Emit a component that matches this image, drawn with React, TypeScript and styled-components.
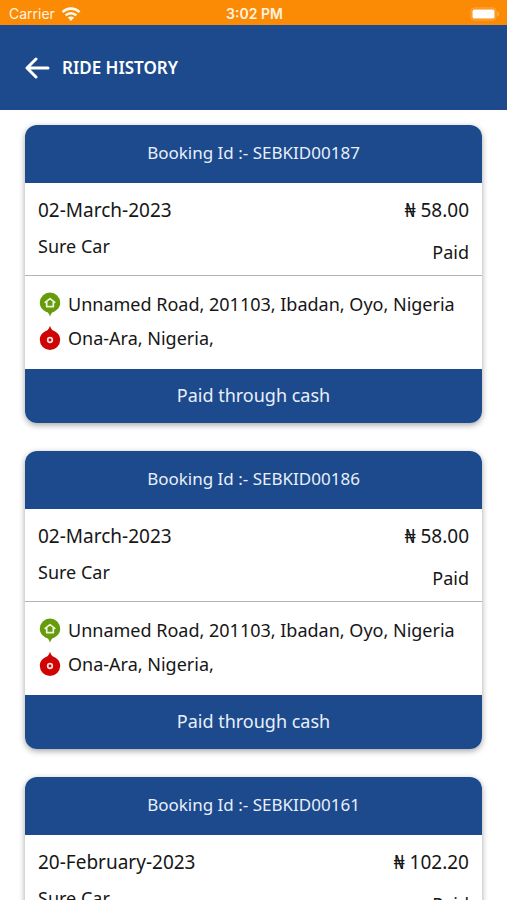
import React from "react";
import styled, { createGlobalStyle } from "styled-components";

const blue = "#1c4a8d";
const orange = "#fb8b04";

const GlobalStyle = createGlobalStyle`
  *, *::before, *::after { box-sizing: border-box; }
  html { scrollbar-width: none; }
  body {
    margin: 0;
    background: #fff;
    color: #161616;
    font-family: "Noto Sans", "Open Sans", sans-serif;
  }
  h1, h2, p, ul { margin: 0; padding: 0; }
`;

const Page = styled.div`
  min-height: 100vh;
`;

const StatusBar = styled.div`
  display: grid;
  grid-template-columns: 1fr auto 1fr;
  align-items: center;
  height: 25px;
  padding: 2px 7px 0 9px;
  background: ${orange};
  color: #fff3e2;
  font: 14px/20px Inter, sans-serif;
`;

const Carrier = styled.div`
  display: flex;
  align-items: center;
  gap: 6px;
`;

const Clock = styled.time`
  font-size: 14px;
  font-weight: 600;
`;

const Battery = styled.svg`
  justify-self: end;
`;

const AppBar = styled.header`
  display: flex;
  align-items: center;
  gap: 12px;
  height: 85px;
  padding: 0 25px;
  background: ${blue};
  color: #fff;
`;

const BackButton = styled.button`
  display: flex;
  padding: 0;
  border: 0;
  background: none;
  color: inherit;
  cursor: pointer;
`;

const Title = styled.h1`
  font-size: 17px;
  font-weight: 600;
  line-height: 24px;
`;

const RideList = styled.ul`
  display: flex;
  flex-direction: column;
  gap: 28px;
  padding: 15px 25px 28px;
  list-style: none;
`;

const Card = styled.li`
  overflow: hidden;
  border-radius: 12px;
  background: #fff;
  box-shadow: 0 2px 6px rgba(0, 0, 0, 0.36);
`;

const CardHeader = styled.h2`
  padding: 15px 12px 17px;
  background: ${blue};
  color: #e9effa;
  font-size: 17px;
  font-weight: 400;
  line-height: 26px;
  text-align: center;
`;

const Summary = styled.div`
  display: flex;
  justify-content: space-between;
  height: 93px;
  padding: 14px 13px 0;
  border-bottom: 1px solid #b3b3b3;
`;

const SummaryColumn = styled.div<{ $end?: boolean }>`
  display: flex;
  flex-direction: column;
  gap: ${({ $end }) => ($end ? 16 : 10)}px;
  text-align: ${({ $end }) => ($end ? "right" : "left")};
  font-size: 18px;
  line-height: 26px;
`;

const Lead = styled.p`
  font-size: 19px;
`;

const Route = styled.div`
  display: flex;
  flex-direction: column;
  gap: 8px;
  padding: 15px 13px 18px;
`;

const Stop = styled.div`
  display: flex;
  align-items: center;
  gap: 6px;
  font-size: 18px;
  line-height: 26px;
`;

const CardFooter = styled.p`
  padding: 13px 12px 15px;
  background: ${blue};
  color: #e9effa;
  font-size: 18px;
  line-height: 26px;
  text-align: center;
`;

const WifiIcon = () => (
  <svg width="20" height="14" viewBox="0 0 20 14" aria-hidden="true">
    <g fill="none" stroke="#fff8ed" strokeWidth="2.6">
      <path d="M1.5 5.2C6.3 0.4 13.7 0.4 18.5 5.2" />
      <path d="M4.6 8.4C7.7 5.5 12.3 5.5 15.4 8.4" />
    </g>
    <path d="M6.8 10.6C8.6 9 11.4 9 13.2 10.6L10 13.9Z" fill="#fff8ed" />
  </svg>
);

const BatteryIcon = () => (
  <Battery width="30" height="14" viewBox="0 0 30 14" role="img" aria-label="Battery full">
    <rect x="1" y="1" width="25" height="12" rx="3" fill="none" stroke="#fda94a" />
    <rect x="2.5" y="2.5" width="22" height="9" rx="1.5" fill="#fff" />
    <path d="M27.500 4.500C29.500 5.200 29.500 8.800 27.500 9.500Z" fill="#fdb65f" />
  </Battery>
);

const ArrowIcon = () => (
  <svg width="25" height="22" viewBox="0 0 25 22" aria-hidden="true">
    <path
      d="M11 2L2 11L11 20M2.5 11H23"
      fill="none"
      stroke="currentColor"
      strokeWidth="3"
      strokeLinecap="round"
      strokeLinejoin="round"
    />
  </svg>
);

const PickupIcon = () => (
  <svg width="24" height="26" viewBox="0 0 24 26" aria-hidden="true">
    <path
      d="M12 1.5A10.2 10.2 0 0 1 22.2 11.7C22.2 16.5 18.8 19.700 14.6 21.3C13.3 22.2 12.600 24 12 25.7C11.4 24 10.7 22.2 9.4 21.3C5.2 19.7 1.8 16.5 1.8 11.7A10.2 10.2 0 0 1 12 1.5Z"
      fill="#669b0c"
    />
    <path
      d="M7.2 11.3L12 7.6L16.8 11.3H15.300V15.700H8.700V11.300Z"
      fill="none"
      stroke="#eef5dc"
      strokeWidth="1.7"
      strokeLinejoin="round"
    />
  </svg>
);

const DropIcon = () => (
  <svg width="24" height="26" viewBox="0 0 24 26" aria-hidden="true">
    <path
      d="M12 0.8C12.6 2.5 13.3 4.300 14.6 5.2C18.8 6.8 22.2 10 22.2 14.8A10.2 10.2 0 0 1 1.8 14.8C1.8 10 5.2 6.8 9.4 5.2C10.7 4.3 11.4 2.5 12 0.8Z"
      fill="#cf0404"
    />
    <circle cx="12" cy="15" r="2.3" fill="none" stroke="#fbe3e3" strokeWidth="1.7" />
  </svg>
);

interface Ride {
  id: string;
  date: string;
  car: string;
  fare: string;
  status: string;
  pickup: string;
  drop: string;
  payment: string;
}

const shared = {
  car: "Sure Car",
  status: "Paid",
  pickup: "Unnamed Road, 201103, Ibadan, Oyo, Nigeria",
  drop: "Ona-Ara, Nigeria,",
  payment: "Paid through cash",
};

const rides: Ride[] = [
  { id: "SEBKID00187", date: "02-March-2023", fare: "₦ 58.00", ...shared },
  { id: "SEBKID00186", date: "02-March-2023", fare: "₦ 58.00", ...shared },
  { id: "SEBKID00161", date: "20-February-2023", fare: "₦ 102.20", ...shared },
];

const RideCard = ({ ride }: { ride: Ride }) => (
  <Card>
    <CardHeader>Booking Id :- {ride.id}</CardHeader>
    <Summary>
      <SummaryColumn>
        <Lead>{ride.date}</Lead>
        <p>{ride.car}</p>
      </SummaryColumn>
      <SummaryColumn $end>
        <Lead>{ride.fare}</Lead>
        <p>{ride.status}</p>
      </SummaryColumn>
    </Summary>
    <Route>
      <Stop>
        <PickupIcon />
        <p>{ride.pickup}</p>
      </Stop>
      <Stop>
        <DropIcon />
        <p>{ride.drop}</p>
      </Stop>
    </Route>
    <CardFooter>{ride.payment}</CardFooter>
  </Card>
);

export default function App() {
  return (
    <Page>
      <GlobalStyle />
      <StatusBar>
        <Carrier>
          Carrier
          <WifiIcon />
        </Carrier>
        <Clock>3:02 PM</Clock>
        <BatteryIcon />
      </StatusBar>
      <AppBar>
        <BackButton type="button" aria-label="Back">
          <ArrowIcon />
        </BackButton>
        <Title>RIDE HISTORY</Title>
      </AppBar>
      <RideList>
        {rides.map((ride) => (
          <RideCard key={ride.id} ride={ride} />
        ))}
      </RideList>
    </Page>
  );
}
